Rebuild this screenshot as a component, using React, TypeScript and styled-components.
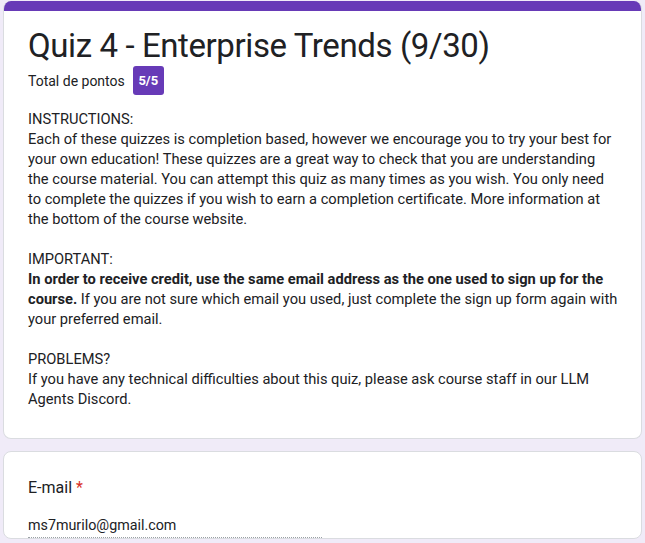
import React from 'react'
import styled, { createGlobalStyle } from 'styled-components'

const GlobalStyle = createGlobalStyle`
  html, body {
    margin: 0;
    padding: 0;
    background: #f0ebf8;
  }
  body {
    padding: 1px 3px 0;
    font-family: Roboto, "Liberation Sans", Arial, sans-serif;
    color: #202124;
  }
`

const Page = styled.div`
  display: flex;
  flex-direction: column;
  gap: 12px;
`

const Card = styled.div<{ accent?: boolean }>`
  background: #fff;
  border: 1px solid #dadce0;
  border-radius: 8px;
  overflow: hidden;
  ${({ accent }) => accent && 'border-top: none;'}
`

const AccentBar = styled.div`
  height: 10px;
  background: #673ab7;
`

const Header = styled.div`
  padding: 15px 22.5px 29px 24px;
`

const Title = styled.h1`
  margin: 0;
  font-size: 33px;
  font-weight: 400;
  line-height: 40px;
  letter-spacing: -0.4px;
`

const ScoreRow = styled.div`
  display: flex;
  align-items: center;
  gap: 8px;
  font-size: 14px;
`

const Badge = styled.span`
  display: inline-flex;
  align-items: center;
  justify-content: center;
  width: 31px;
  height: 29px;
  border-radius: 3px;
  background: #673ab7;
  color: #fff;
  font-weight: 700;
  font-size: 13px;
`

const Description = styled.div`
  margin-top: 14px;
  font-size: 14.67px;
  line-height: 20px;
  white-space: pre-wrap;
`

const Strong = styled.b`
  font-weight: 700;
`

const Question = styled.div`
  padding: 24px 24px 0;
`

const QuestionTitle = styled.div`
  font-size: 16px;
  line-height: 24px;
`

const Required = styled.span`
  color: #d93025;
`

const Answer = styled.div`
  margin-top: 15px;
  width: 294px;
  font-size: 14.3px;
  line-height: 20px;
  padding-bottom: 2px;
  border-bottom: 1px dotted #9aa0a6;
`

export default function App() {
  return (
    <>
      <GlobalStyle />
      <Page>
        <Card accent>
          <AccentBar />
          <Header>
            <Title>Quiz 4 - Enterprise Trends (9/30)</Title>
            <ScoreRow>
              Total de pontos <Badge>5/5</Badge>
            </ScoreRow>
            <Description>
              {'INSTRUCTIONS:\nEach of these quizzes is completion based, however we encourage you to try your best for your own education! These quizzes are a great way to check that you are understanding the course material. You can attempt this quiz as many times as you wish. You only need to complete the quizzes if you wish to earn a completion certificate. More information at the bottom of the course website.\n\nIMPORTANT:\n'}
              <Strong>In order to receive credit, use the same email address as the one used to sign up for the course.</Strong>
              {' If you are not sure which email you used, just complete the sign up form again with your preferred email.\n\nPROBLEMS?\nIf you have any technical difficulties about this quiz, please ask course staff in our LLM Agents Discord.'}
            </Description>
          </Header>
        </Card>
        <Card>
          <Question>
            <QuestionTitle>
              E-mail <Required>*</Required>
            </QuestionTitle>
            <Answer>ms7murilo@gmail.com</Answer>
          </Question>
        </Card>
      </Page>
    </>
  )
}
